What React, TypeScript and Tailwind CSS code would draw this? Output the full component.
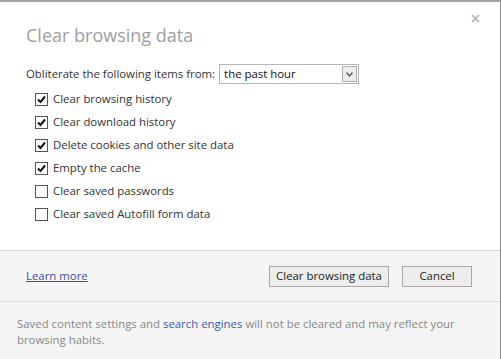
const items = [
  { label: "Clear browsing history", checked: true },
  { label: "Clear download history", checked: true },
  { label: "Delete cookies and other site data", checked: true },
  { label: "Empty the cache", checked: true },
  { label: "Clear saved passwords", checked: false },
  { label: "Clear saved Autofill form data", checked: false },
];

function Box({ checked }: { checked: boolean }) {
  return (
    <span className="w-[13px] h-[13px] border border-[#555] bg-white flex items-center justify-center shrink-0">
      {checked && (
        <svg width="9" height="9" viewBox="0 0 9 9">
          <path d="M1 4.5 L3.5 7 L8 1.5" stroke="#111" strokeWidth="2" fill="none" />
        </svg>
      )}
    </span>
  );
}

export default function App() {
  return (
    <div
      className="w-[501px] h-[359px] bg-white border-t-2 border-t-[#a3a3a3] border-r border-r-[#8a8a8a] flex flex-col text-[11.4px] text-[#333]"
      style={{ fontFamily: '"Open Sans", "Noto Sans", sans-serif' }}
    >
      {/* Header */}
      <div className="relative pl-[26px] pt-[20px]">
        <h1 className="text-[18px] text-[#a0a0a0] leading-[26px]">Clear browsing data</h1>
        <svg className="absolute right-[20px] top-[12px]" width="9" height="9" viewBox="0 0 9 9">
          <path d="M1 1 L8 8 M8 1 L1 8" stroke="#b0b0b0" strokeWidth="1.6" />
        </svg>
      </div>

      {/* Body */}
      <div className="pl-[26px] pt-[16px] flex-1">
        <div className="flex items-center h-[20px]">
          <span>Obliterate the following items from:</span>
          <div className="ml-[4px] w-[140px] h-[20px] border border-[#b5b5b5] flex items-center justify-between pl-[4px]">
            <span className="text-[#111]">the past hour</span>
            <span className="w-[15px] h-[16px] mr-[1px] border border-[#b0b0b0] bg-[#ececec] flex items-center justify-center">
              <svg width="7" height="5" viewBox="0 0 7 5">
                <path d="M0.5 0.5 L3.5 4 L6.5 0.5" stroke="#555" strokeWidth="1.3" fill="none" />
              </svg>
            </span>
          </div>
        </div>
        <div className="flex flex-col gap-[7px] mt-[7px] pl-[9px]">
          {items.map((it) => (
            <div key={it.label} className="flex items-center h-[16px] gap-[5px]">
              <Box checked={it.checked} />
              <span>{it.label}</span>
            </div>
          ))}
        </div>
      </div>

      {/* Footer buttons */}
      <div className="h-[51px] bg-[#f5f5f5] border-t border-[#dcdcdc] flex items-center pl-[26px] pr-[28px]">
        <a className="text-[#3b4fa0] underline">Learn more</a>
        <div className="ml-auto flex gap-[13px]">
          <button className="h-[21px] w-[120px] border border-[#a8a8a8] bg-[#ededed] text-[#222]">
            Clear browsing data
          </button>
          <button className="h-[21px] w-[70px] border border-[#a8a8a8] bg-[#ededed] text-[#222]">
            Cancel
          </button>
        </div>
      </div>

      {/* Note */}
      <div className="h-[58px] bg-[#f5f5f5] border-t border-[#dcdcdc] pl-[17px] pt-[14px] text-[#888] leading-[16px]">
        Saved content settings and <span className="text-[#3b5aa8]">search engines</span> will not be cleared and may reflect your
        <br />
        browsing habits.
      </div>
    </div>
  );
}
